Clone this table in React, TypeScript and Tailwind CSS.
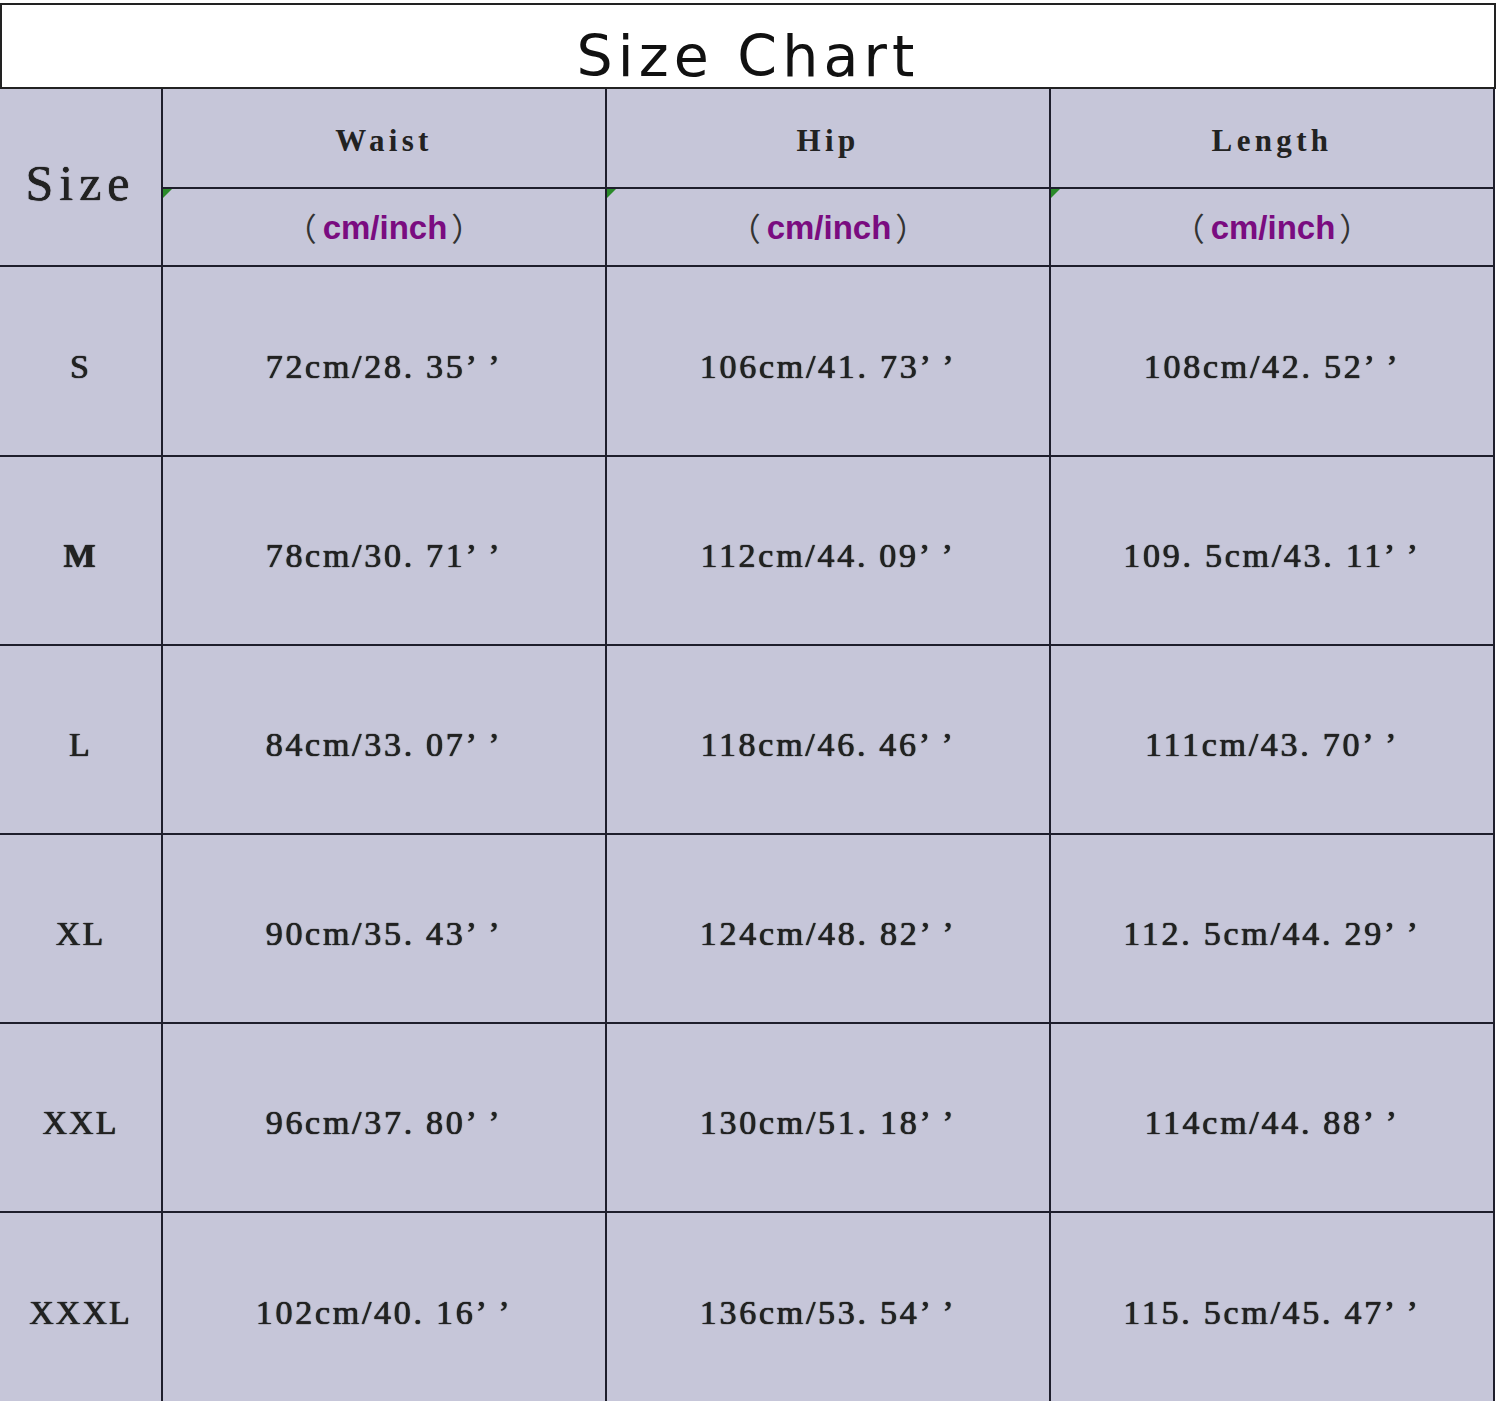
const rows = [
  { size: "S", waist: "72cm/28. 35’ ’", hip: "106cm/41. 73’ ’", length: "108cm/42. 52’ ’", h: "h-[190px]" },
  { size: "M", waist: "78cm/30. 71’ ’", hip: "112cm/44. 09’ ’", length: "109. 5cm/43. 11’ ’", h: "h-[189px]" },
  { size: "L", waist: "84cm/33. 07’ ’", hip: "118cm/46. 46’ ’", length: "111cm/43. 70’ ’", h: "h-[189px]" },
  { size: "XL", waist: "90cm/35. 43’ ’", hip: "124cm/48. 82’ ’", length: "112. 5cm/44. 29’ ’", h: "h-[189px]" },
  { size: "XXL", waist: "96cm/37. 80’ ’", hip: "130cm/51. 18’ ’", length: "114cm/44. 88’ ’", h: "h-[189px]" },
  { size: "XXXL", waist: "102cm/40. 16’ ’", hip: "136cm/53. 54’ ’", length: "115. 5cm/45. 47’ ’", h: "h-[188px]" },
]

const headers = ["Waist", "Hip", "Length"]

const serif = "font-['Liberation_Serif','DejaVu_Serif',serif]"
// the scan's glyphs are a little heavier than regular Times
const heavy = "[text-shadow:0_0_0.8px_#1a1a1a,0_0_0.8px_#1a1a1a]"

function Unit() {
  return (
    <div className="relative flex items-center justify-center h-[78px] border-r-2 border-b-2 border-[#1e1e2c]">
      {/* excel's little green marker */}
      <span className="absolute top-0 left-0 w-0 h-0 border-t-[9px] border-t-[#2a8a2a] border-r-[9px] border-r-transparent" />
      <span className="text-[32px] leading-none text-[#333] font-['Noto_Sans_CJK_SC',sans-serif] pr-[6px]">（</span>
      <span className="text-[33px] font-bold text-[#7a0c80] font-['Liberation_Sans',Arial,sans-serif] leading-none">
        cm/inch
      </span>
      <span className="text-[32px] leading-none text-[#333] font-['Noto_Sans_CJK_SC',sans-serif] pl-[4px]">）</span>
    </div>
  )
}

export default function App() {
  return (
    <div className="w-[1500px] h-[1403px] bg-white pt-[3px] overflow-hidden">
      <div className="w-[1496px] h-[86px] border-2 border-[#222] flex items-end justify-center pb-[2px]">
        <h1 className="text-[57px] leading-none tracking-[0.09em] text-[#111] font-['DejaVu_Sans',sans-serif]">
          Size Chart
        </h1>
      </div>

      <div className="w-[1495px] bg-[#c6c6d9] text-[#222]">
        <div className="grid grid-cols-[163px_444px_444px_444px]">
          <div className="row-span-2 flex items-center justify-center border-r-2 border-b-2 border-[#1e1e2c] pt-[12px]">
            <span className={`text-[50px] tracking-[0.12em] ${serif} ${heavy}`}>Size</span>
          </div>
          {headers.map((h) => (
            <div
              key={h}
              className="flex items-center justify-center h-[100px] border-r-2 border-b-2 border-[#1e1e2c] pt-[6px]"
            >
              <span className={`text-[31px] font-bold tracking-[0.14em] ${serif}`}>{h}</span>
            </div>
          ))}
          <Unit />
          <Unit />
          <Unit />
        </div>

        {rows.map((r, i) => (
          <div
            key={r.size}
            className={`grid grid-cols-[163px_444px_444px_444px] ${r.h} ${
              i < rows.length - 1 ? "border-b-2 border-[#1e1e2c]" : ""
            }`}
          >
            <div className="flex items-center justify-center border-r-2 border-[#1e1e2c] pt-[10px]">
              <span className={`text-[34px] tracking-[0.06em] ${serif} ${heavy} ${r.size === "M" ? "font-bold" : ""}`}>
                {r.size}
              </span>
            </div>
            {[r.waist, r.hip, r.length].map((v, j) => (
              <div key={j} className="flex items-center justify-center border-r-2 border-[#1e1e2c] pt-[10px]">
                <span className={`text-[34px] tracking-[0.08em] ${serif} ${heavy}`}>{v}</span>
              </div>
            ))}
          </div>
        ))}
      </div>
    </div>
  )
}
